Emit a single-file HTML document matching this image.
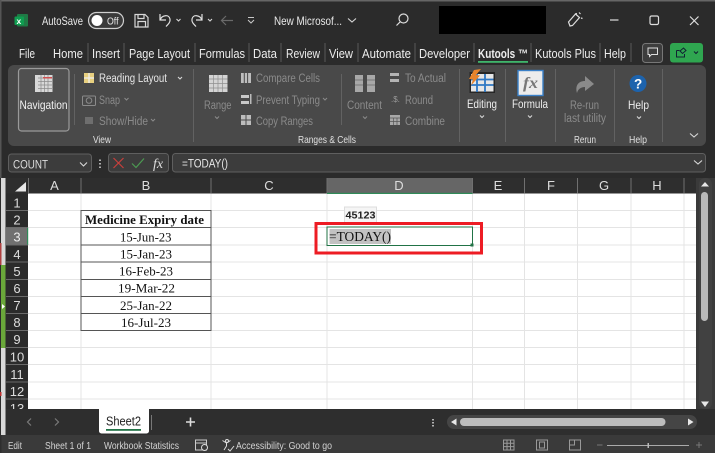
<!DOCTYPE html>
<html><head><meta charset="utf-8"><style>
html,body{margin:0;padding:0;background:#2b2b2b;width:715px;height:453px;overflow:hidden}
svg{display:block}
body>svg{filter:blur(.3px)}
text{font-family:"Liberation Sans",sans-serif;fill:#e8e8e8;font-size:12px}
.t{font-size:12.5px;fill:#ededed}
.d{fill:#8b8b8b;font-size:11.5px}
.l{font-size:10.5px;fill:#e0e0e0}
.s{font-family:"Liberation Serif",serif;font-size:13px;fill:#111}
.h{font-size:13px;fill:#ddd;text-anchor:middle}
.st{font-size:10.5px;fill:#d4d4d4}
.sep{stroke:#626262;stroke-width:1}
.tsep{stroke:#5a5a5a;stroke-width:1}
.ch{fill:none;stroke:#d8d8d8;stroke-width:1.1}
.gl{stroke:#e4e4e4;stroke-width:1}
</style></head><body>
<svg width="715" height="453" viewBox="0 0 715 453" xmlns="http://www.w3.org/2000/svg">
<rect width="715" height="453" fill="#2b2b2b"/>
<rect width="715" height="1.500" fill="#666"/>
<rect width="1.500" height="178" fill="#555"/>

<!-- title bar -->
<rect x="17" y="14" width="11" height="12.500" rx="1" fill="#1f7a45"/><rect x="14.500" y="16.500" width="9.500" height="8.500" rx="1" fill="#0f9d50"/>
<text x="16.500" y="24" style="font-size:8.500px;font-weight:bold;fill:#fff">x</text>
<text x="42" y="25" textLength="41" lengthAdjust="spacingAndGlyphs">AutoSave</text>
<rect x="88.500" y="12.500" width="35" height="16" rx="8" fill="#3a3a3a" stroke="#cfcfcf" stroke-width="1.200"/>
<circle cx="97" cy="20.500" r="5.500" fill="#fff"/>
<text x="107" y="24.500" textLength="11.500" lengthAdjust="spacingAndGlyphs" style="font-size:10px">Off</text>
<path d="M135 14.500h10l3 3v9.500h-13z M138 14.500v4h6v-4 M138 27v-5.500h7.500V27" fill="none" stroke="#d8d8d8" stroke-width="1.200"/>
<path d="M160 14v6h6 M160 20c2-5 9-6 10-1 .6 3-1.500 5-4 7.500" fill="none" stroke="#e0e0e0" stroke-width="1.200"/>
<path class="ch" d="M176.500 19l2 2 2-2"/>
<path d="M202 14v6h-6 M202 20c-2-5-9-6-10-1-.6 3 1.500 5 4 7.500" fill="none" stroke="#e0e0e0" stroke-width="1.200"/>
<path class="ch" d="M208 19l2 2 2-2"/>
<path d="M233 20.500h-11 M226 16l-4.500 4.500 4.500 4.500" fill="none" stroke="#6a6a6a" stroke-width="1.200"/>
<path d="M248 17.500h6 M248 20l3 3 3-3" fill="none" stroke="#c8c8c8" stroke-width="1"/>
<text x="274" y="25" textLength="68" lengthAdjust="spacingAndGlyphs">New Microsof...</text>
<path class="ch" d="M348 18.500l4 3.500 4-3.500"/>
<circle cx="403.500" cy="18.500" r="4.500" fill="none" stroke="#ddd" stroke-width="1.200"/><path d="M400 22l-3.500 3.500" stroke="#ddd" stroke-width="1.200"/>
<rect x="439" y="6" width="107" height="28" fill="#000"/>
<path d="M570 26l-1.500-4 7-8 4 3.500-7 8z M575 14l2-.5 M579 12.500l1.500 1.500 M581 18l1.500.5" fill="none" stroke="#ddd" stroke-width="1.200"/>
<path d="M610 20h8.500" stroke="#ddd" stroke-width="1.200"/>
<rect x="650" y="16" width="8.500" height="8.500" rx="1.500" fill="none" stroke="#ddd" stroke-width="1.200"/>
<path d="M690 16.500l8.500 8.500 M698.500 16.500l-8.500 8.500" stroke="#ddd" stroke-width="1.200"/>

<!-- tabs -->
<g class="tabs">
<text class="t" x="19" y="58" textLength="16" lengthAdjust="spacingAndGlyphs">File</text>
<text class="t" x="53" y="58" textLength="30" lengthAdjust="spacingAndGlyphs">Home</text>
<text class="t" x="92" y="58" textLength="28" lengthAdjust="spacingAndGlyphs">Insert</text>
<text class="t" x="129" y="58" textLength="61" lengthAdjust="spacingAndGlyphs">Page Layout</text>
<text class="t" x="199" y="58" textLength="46" lengthAdjust="spacingAndGlyphs">Formulas</text>
<text class="t" x="253" y="58" textLength="24" lengthAdjust="spacingAndGlyphs">Data</text>
<text class="t" x="286" y="58" textLength="34" lengthAdjust="spacingAndGlyphs">Review</text>
<text class="t" x="329" y="58" textLength="24" lengthAdjust="spacingAndGlyphs">View</text>
<text class="t" x="362" y="58" textLength="49" lengthAdjust="spacingAndGlyphs">Automate</text>
<text class="t" x="419" y="58" textLength="51" lengthAdjust="spacingAndGlyphs">Developer</text>
<text class="t" x="478" y="58" textLength="50" lengthAdjust="spacingAndGlyphs" style="font-weight:bold">Kutools ™</text>
<text class="t" x="535" y="58" textLength="61" lengthAdjust="spacingAndGlyphs">Kutools Plus</text>
<text class="t" x="604" y="58" textLength="22" lengthAdjust="spacingAndGlyphs">Help</text>
</g>
<path class="tsep" d="M88 43v19M124 43v19M195 43v19M249 43v19M281 43v19M325 43v19M358 43v19M415 43v19M474 43v19M531 43v19M600 43v19M631 43v19"/>
<rect x="478" y="61" width="50" height="1.800" fill="#3fb56b"/>
<rect x="642.500" y="43.500" width="20" height="19" rx="3" fill="#3d3d3d" stroke="#777"/>
<path d="M648 48h9.500v6.500h-6l-2 2v-2h-1.500z" fill="none" stroke="#ddd" stroke-width="1"/>
<rect x="670" y="43" width="33" height="19.500" rx="3" fill="#2fa650"/>
<path d="M676.500 50.500h3 M676.500 50.500v6.500h8v-3 M680 51l3.500-3 2.500 2.500-3.500 3z" fill="none" stroke="#123" stroke-width="1"/>
<path d="M694 51.500l2 2 2-2" fill="none" stroke="#123" stroke-width="1.100"/>

<!-- ribbon -->
<rect x="8" y="65" width="698" height="81" rx="6" fill="#494949"/>
<rect x="18.500" y="68.500" width="50.500" height="62.500" rx="3" fill="#505050" stroke="#9a9a9a" stroke-width="1.200"/>
<rect x="35" y="75" width="17.500" height="17" fill="#d8d8d8"/>
<path d="M38 78h14M38 81.500h14M38 85h14M38 88.500h14M41 75v17M44.500 75v17M48 75v17" stroke="#8a8a8a" stroke-width=".7"/>
<rect x="43" y="77" width="9" height="1.500" fill="#d05050"/>
<text x="19.500" y="109" textLength="48" lengthAdjust="spacingAndGlyphs" style="fill:#f2f2f2">Navigation</text>
<path class="sep" d="M74.500 74v51M193.500 69v73M341.500 74v51M459.500 69v73M505.500 69v73M555.500 69v73M614.500 69v73M662.500 69v73"/>

<rect x="84" y="73" width="10" height="10" fill="#e8d080"/><path d="M89 73v10M84 78h10" stroke="#eee" stroke-width="1.300"/>
<text x="99" y="82" textLength="68" lengthAdjust="spacingAndGlyphs" style="font-size:11.500px;fill:#e6e6e6">Reading Layout</text>
<path class="ch" d="M178 77l2 2 2-2"/>
<rect x="82.500" y="96" width="13" height="9.500" rx="1" fill="none" stroke="#8b8b8b"/><circle cx="89" cy="100.500" r="2.800" fill="none" stroke="#8b8b8b"/>
<text class="d" x="99" y="104" textLength="21" lengthAdjust="spacingAndGlyphs">Snap</text>
<path d="M124.500 98l2 2 2-2" fill="none" stroke="#8b8b8b"/>
<rect x="85" y="117" width="8" height="7" fill="#6e6e6e"/>
<text class="d" x="99" y="125" textLength="49" lengthAdjust="spacingAndGlyphs">Show/Hide</text>
<path d="M151 119l2 2 2-2" fill="none" stroke="#8b8b8b"/>
<text class="l" x="93" y="143" textLength="18" lengthAdjust="spacingAndGlyphs">View</text>

<rect x="209" y="75" width="18.500" height="17" fill="#d4d4d4"/>
<path d="M209 79h18.500M209 83.500h18.500M209 88h18.500M213.500 75v17M218 75v17M222.500 75v17" stroke="#8f8f8f" stroke-width=".7"/>
<text class="d" x="204" y="109" textLength="27.500" lengthAdjust="spacingAndGlyphs">Range</text>
<path d="M215 116.500l2 2 2-2" fill="none" stroke="#8b8b8b"/>
<rect x="241" y="73" width="10" height="10" fill="#bdbdbd"/><path d="M244.300 73v10M247.600 73v10" stroke="#494949"/>
<text class="d" x="256" y="82" textLength="64" lengthAdjust="spacingAndGlyphs">Compare Cells</text>
<rect x="241" y="95" width="8" height="3" fill="#c8c8c8"/><rect x="241" y="101" width="8" height="3" fill="#c8c8c8"/><rect x="250" y="94" width="1.500" height="10" fill="#bbb"/>
<text class="d" x="256" y="104" textLength="64" lengthAdjust="spacingAndGlyphs">Prevent Typing</text>
<path d="M323 98l2 2 2-2" fill="none" stroke="#8b8b8b"/>
<rect x="241" y="115" width="10" height="10" fill="#bdbdbd"/><path d="M241 120h10M246 115v10" stroke="#494949"/>
<text class="d" x="256" y="125" textLength="57" lengthAdjust="spacingAndGlyphs">Copy Ranges</text>
<text class="l" x="298" y="143" textLength="58" lengthAdjust="spacingAndGlyphs">Ranges &amp; Cells</text>

<rect x="355" y="75" width="8" height="17" fill="#a8a8a8"/><rect x="367" y="75" width="8" height="17" fill="#a8a8a8"/>
<path d="M355 80h8M355 85h8M367 80h8M367 85h8" stroke="#777"/>
<text class="d" x="347" y="109" textLength="35" lengthAdjust="spacingAndGlyphs">Content</text>
<path d="M363 116.500l2 2 2-2" fill="none" stroke="#8b8b8b"/>
<rect x="390" y="73" width="9" height="3" fill="#b4b4b4"/><rect x="390" y="79" width="9" height="3" fill="#b4b4b4"/>
<text class="d" x="405" y="82" textLength="41" lengthAdjust="spacingAndGlyphs">To Actual</text>
<text x="391" y="102" style="font-size:8px;fill:#999">.$.</text>
<text class="d" x="405" y="104" textLength="28" lengthAdjust="spacingAndGlyphs">Round</text>
<rect x="390" y="115" width="10" height="10" fill="#a8a8a8"/><path d="M390 118h10M390 121.500h10M393.500 118v7M397 118v7" stroke="#555" stroke-width=".7"/>
<text class="d" x="405" y="125" textLength="40" lengthAdjust="spacingAndGlyphs">Combine</text>

<rect x="469.500" y="72" width="25.500" height="21" fill="#262626"/>
<rect x="471" y="74" width="22.500" height="17.500" fill="#e6e6e6"/>
<path d="M471 79.500h22.500M471 85h22.500M477 74v18M485 74v18" stroke="#2f78c4" stroke-width="1.800"/>
<path d="M481 69l-7 1-5 9 4 .5-2 6 9-10-4-.5z" fill="#e8842c"/>
<text x="467" y="108" textLength="30" lengthAdjust="spacingAndGlyphs" style="fill:#eee">Editing</text>
<path class="ch" d="M480 115.500l2 2 2-2"/>
<rect x="518" y="70.500" width="25" height="25" fill="#ececec" stroke="#3a80c8" stroke-width="1.400"/>
<text x="523" y="88" textLength="15" lengthAdjust="spacingAndGlyphs" style="font-family:'Liberation Serif',serif;font-style:italic;font-weight:bold;font-size:16px;fill:#777">fx</text>
<text x="512" y="108" textLength="36" lengthAdjust="spacingAndGlyphs" style="fill:#eee">Formula</text>
<path class="ch" d="M528 115.500l2 2 2-2"/>
<path d="M577 93c-2-7 1-12 8-12v-5l9 8-9 7v-4c-4 0-7 2-8 6z" fill="#8a8a8a"/>
<text class="d" x="570" y="109" textLength="29" lengthAdjust="spacingAndGlyphs">Re-run</text>
<text class="d" x="564" y="122" textLength="42" lengthAdjust="spacingAndGlyphs">last utility</text>
<text class="l" x="574" y="143" textLength="22" lengthAdjust="spacingAndGlyphs">Rerun</text>
<circle cx="638" cy="83.500" r="8.500" fill="#1d63ad"/>
<text x="634" y="88.500" style="font-size:13.500px;font-weight:bold;fill:#fff">?</text>
<text x="628" y="109" textLength="21" lengthAdjust="spacingAndGlyphs" style="fill:#eee">Help</text>
<path class="ch" d="M637 116.500l2 2 2-2"/>
<text class="l" x="629" y="143" textLength="18" lengthAdjust="spacingAndGlyphs">Help</text>
<path class="ch" d="M690 133.500l4 3.500 4-3.500"/>

<!-- formula bar -->
<rect x="8.500" y="154" width="83" height="18" rx="3" fill="#3c3c3c" stroke="#5f5f5f"/>
<text x="13" y="168.500" textLength="35" lengthAdjust="spacingAndGlyphs" style="font-size:11.500px;fill:#ddd">COUNT</text>
<path class="ch" d="M80 162.500l3.500 3.500 3.500-3.500"/>
<path d="M100 159.500v1.500M100 163v1.500M100 166.500v1.500" stroke="#ddd" stroke-width="1.500"/>
<rect x="108.500" y="153.500" width="60" height="18.500" rx="3" fill="#3c3c3c" stroke="#5f5f5f"/>
<path d="M113.500 158l10 10M123.500 158l-10 10" stroke="#c9403c" stroke-width="1.200"/>
<path d="M132 163.500l4 4 8-9" fill="none" stroke="#4c9a52" stroke-width="1.200"/>
<text x="153" y="168" style="font-family:'Liberation Serif',serif;font-style:italic;font-size:14px;fill:#ddd">fx</text>
<rect x="172.500" y="153.500" width="533" height="18.500" rx="3" fill="#3c3c3c" stroke="#5f5f5f"/>
<text x="182" y="167.500" textLength="46" lengthAdjust="spacingAndGlyphs" style="font-size:11.500px;fill:#e6e6e6">=TODAY()</text>
<path class="ch" d="M694 160.500l4 3.500 4-3.500"/>

<!-- sheet -->
<rect x="6" y="178" width="690" height="16" fill="#2e2e2e"/>
<rect x="6" y="193.500" width="690" height="215.500" fill="#fff"/>
<path d="M26 182v9.500h-11z" fill="#e8e8e8"/>
<rect x="327" y="178" width="145" height="15.500" fill="#666"/>
<path d="M28.500 178v15M81 178v15M211 178v15M327 178v15M472.500 178v15M524.500 178v15M577.500 178v15M631 178v15M684 178v15" stroke="#707070"/>
<text class="h" x="54.500" y="190">A</text><text class="h" x="146" y="190">B</text><text class="h" x="269" y="190">C</text><text class="h" x="399" y="190">D</text><text class="h" x="498" y="190">E</text><text class="h" x="551" y="190">F</text><text class="h" x="604" y="190">G</text><text class="h" x="657" y="190">H</text>
<rect x="327" y="192.800" width="145.500" height="1.200" fill="#2f8a58"/>
<rect x="211" y="193.200" width="116" height=".8" fill="#aaa"/>

<path class="gl" d="M81 194v215M211 194v215M327 194v215M472.500 194v215M524.500 194v215M577.500 194v215M631 194v215M684 194v215"/>
<path class="gl" d="M28 210.500h668M28 227.500h668M28 245h668M28 262h668M28 279.500h668M28 296.500h668M28 313.500h668M28 330.500h668M28 347.500h668M28 364.500h668M28 382h668M28 399h668"/>

<!-- row headers -->
<rect x="6" y="193.500" width="22" height="215.500" fill="#2b2b2b"/>
<rect x="6" y="227.500" width="22" height="17.500" fill="#707070"/>
<rect x="27" y="227.500" width="1.200" height="17.500" fill="#2f8a58"/>
<path d="M6 210.500h22M6 227.500h22M6 245h22M6 262h22M6 279.500h22M6 296.500h22M6 313.500h22M6 330.500h22M6 347.500h22M6 364.500h22M6 382h22M6 399h22" stroke="#6a6a6a"/>
<text class="h" x="17" y="207.500">1</text><text class="h" x="17" y="224.500">2</text><text class="h" x="17" y="241.500" style="fill:#eee">3</text><text class="h" x="17" y="259">4</text><text class="h" x="17" y="276">5</text><text class="h" x="17" y="293">6</text><text class="h" x="17" y="310">7</text><text class="h" x="17" y="327">8</text><text class="h" x="17" y="344">9</text><text class="h" x="17" y="361.500">10</text><text class="h" x="17" y="379">11</text><text class="h" x="17" y="396">12</text>
<svg x="6" y="399" width="22" height="10"><text class="h" x="11" y="14">13</text></svg>

<!-- left strip -->
<rect x="0" y="178" width="6" height="231" fill="#2b2b2b"/>
<rect x="1" y="178" width="4.500" height="257" fill="#d9d9d9"/>
<rect x="1" y="265" width="4.500" height="83" fill="#6aa83a"/>
<rect x="0" y="243" width="1.500" height="22" fill="#b04040"/>
<path d="M2 304l3 2.500-3 2.500z" fill="#fff"/>
<rect x="0" y="392" width="1.500" height="4" fill="#c03030"/>

<!-- table -->
<rect x="81" y="210.500" width="130" height="120" fill="#fff" stroke="#555" stroke-width="1"/>
<path d="M81 227.500h130M81 245h130M81 262h130M81 279.500h130M81 296.500h130M81 313.500h130" stroke="#555"/>
<text class="s" x="85" y="224" textLength="119" lengthAdjust="spacingAndGlyphs" style="font-weight:bold">Medicine Expiry date</text>
<text class="s" x="120" y="241.500" textLength="51.500" lengthAdjust="spacingAndGlyphs">15-Jun-23</text>
<text class="s" x="120" y="258.500" textLength="52" lengthAdjust="spacingAndGlyphs">15-Jan-23</text>
<text class="s" x="119" y="275.500" textLength="54" lengthAdjust="spacingAndGlyphs">16-Feb-23</text>
<text class="s" x="118" y="292.500" textLength="57" lengthAdjust="spacingAndGlyphs">19-Mar-22</text>
<text class="s" x="120" y="310" textLength="52" lengthAdjust="spacingAndGlyphs">25-Jan-22</text>
<text class="s" x="121" y="327" textLength="50" lengthAdjust="spacingAndGlyphs">16-Jul-23</text>

<!-- active cell -->
<rect x="344.500" y="207" width="32" height="15.500" fill="#f5f5f5" stroke="#ddd"/>
<text x="345.500" y="218.500" textLength="30" lengthAdjust="spacingAndGlyphs" style="font-size:10.500px;font-weight:bold;fill:#222">45123</text>
<rect x="327" y="227" width="145.500" height="18.500" fill="#fff" stroke="#217346" stroke-width="1"/>
<rect x="329.500" y="229" width="61.500" height="15" fill="#c2c2c2"/>
<text x="329" y="241" textLength="62" lengthAdjust="spacingAndGlyphs" class="s" style="font-size:13.500px">=TODAY()</text>
<rect x="470.500" y="243.500" width="3" height="3" fill="#217346"/>
<rect x="316" y="223.500" width="165.500" height="29.500" fill="none" stroke="#ed1c24" stroke-width="3"/>

<!-- vertical scroll -->
<rect x="696" y="178" width="19" height="231" fill="#3a3a3a"/>
<rect x="699" y="178" width="13" height="231" rx="6" fill="#414141"/>
<path d="M705 182l4 4.500h-8z" fill="#e8e8e8"/>
<rect x="701" y="192" width="7" height="129" rx="3.500" fill="#b9b9b9"/>
<path d="M705 407l4-5.500h-8z" fill="#e8e8e8"/>

<!-- sheet tabs -->
<rect x="6" y="409" width="709" height="26" fill="#2e2e2e"/>
<rect x="0" y="409" width="6" height="44" fill="#2e2e2e"/>
<rect x="1" y="409" width="4.500" height="26" fill="#d9d9d9"/>
<path d="M31 418.500l-3.500 3.500 3.500 3.500M55 418.500l3.500 3.500-3.500 3.500" fill="none" stroke="#7a7a7a" stroke-width="1.200"/>
<path d="M99 409h50v22a2.500 2.500 0 0 1-2.500 2.500h-45a2.500 2.500 0 0 1-2.500-2.500z" fill="#fff"/>
<text x="106" y="425.500" textLength="35" lengthAdjust="spacingAndGlyphs" style="font-size:12.500px;fill:#222">Sheet2</text>
<rect x="106" y="429" width="35" height="1.800" fill="#217346"/>
<path d="M151.500 415v15" stroke="#777"/>
<path d="M186 422h9M190.500 417.500v9" stroke="#ddd" stroke-width="1.600"/>
<path d="M433 419v1.500M433 422v1.500M433 425v1.500" stroke="#ddd" stroke-width="1.500"/>
<rect x="447" y="415" width="250" height="14" rx="7" fill="#454545"/>
<path d="M451 422l5.500-3.500v7z" fill="#e8e8e8"/>
<rect x="460" y="418" width="205.500" height="8" rx="4" fill="#bdbdbd"/>
<path d="M693.500 422l-5.500-3.500v7z" fill="#e8e8e8"/>

<!-- status bar -->
<rect x="1.500" y="435" width="713.500" height="18" fill="#3a3a3a"/>
<text class="st" x="8" y="449" textLength="14" lengthAdjust="spacingAndGlyphs">Edit</text>
<text class="st" x="45" y="449" textLength="46" lengthAdjust="spacingAndGlyphs">Sheet 1 of 1</text>
<text class="st" x="104" y="449" textLength="75" lengthAdjust="spacingAndGlyphs">Workbook Statistics</text>
<rect x="195.500" y="440" width="11" height="10" fill="none" stroke="#ccc"/><path d="M195.500 443h11" stroke="#ccc"/><circle cx="204.500" cy="447.500" r="3" fill="#3a3a3a" stroke="#ddd"/>
<circle cx="227" cy="441" r="1.500" fill="none" stroke="#ddd"/>
<path d="M222.500 440.500l4 2.500 4-2.500 M226.500 443v3l-2.500 4 M228 449l2 2 4-5" fill="none" stroke="#ddd" stroke-width="1"/>
<text class="st" x="236" y="449" textLength="96" lengthAdjust="spacingAndGlyphs">Accessibility: Good to go</text>
<rect x="503.500" y="440" width="10.500" height="10" fill="none" stroke="#999"/><path d="M503.500 443.300h10.500M503.500 446.600h10.500M507 440v10M510.500 440v10" stroke="#999"/>
<rect x="536.500" y="440" width="11" height="10" fill="none" stroke="#999"/><rect x="539.500" y="442" width="5" height="6" fill="none" stroke="#999"/>
<path d="M569.500 440h11v10h-11z M569.500 445h5v-5" fill="none" stroke="#999"/>
<path d="M597 445h5.500" stroke="#777"/>
<path d="M607 445.500h82" stroke="#aaa"/>
<rect x="647.500" y="443" width="1.500" height="5" fill="#bbb"/>
<path d="M696 445h6M699 442v6" stroke="#777"/>
</svg>
</body></html>
